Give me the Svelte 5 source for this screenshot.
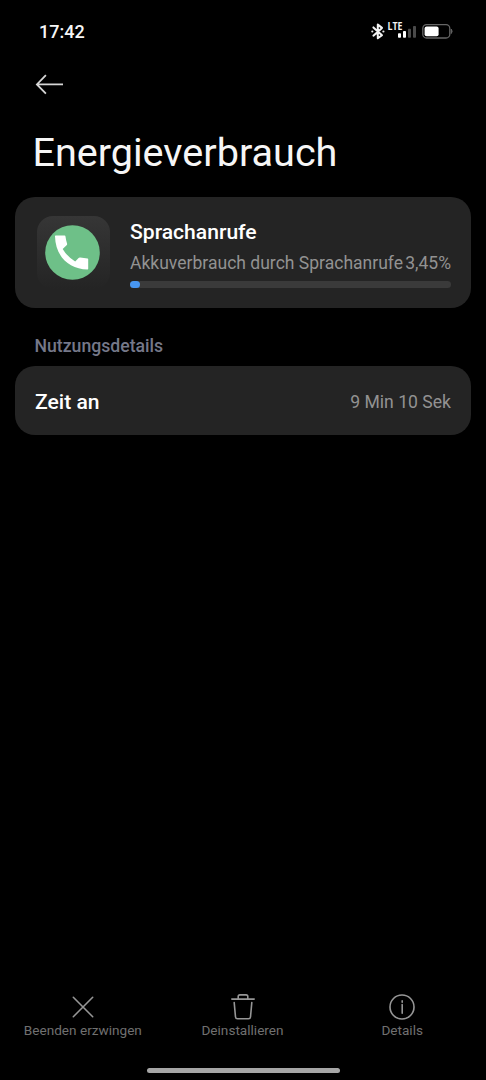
<script>
  const app = {
    name: 'Sprachanrufe',
    summary: 'Akkuverbrauch durch Sprachanrufe',
    percent: 3.45,
  };
  const details = [{ label: 'Zeit an', value: '9 Min 10 Sek' }];
  const percentText = app.percent.toLocaleString('de-DE') + '%';
</script>

<div class="screen">
  <header class="status">
    <span class="clock">17:42</span>
    <svg class="indicators" width="86" height="24" viewBox="370 20 86 24" fill="none">
      <path d="M373.4 27.4 L382 35.2 L377.8 38.3 V24.6 L382 27.9 L373.4 35.7" stroke="#f4f4f4" stroke-width="2" stroke-linejoin="round" stroke-linecap="round" />
      <circle cx="372.3" cy="31.5" r="1.1" fill="#e8e8e8" />
      <circle cx="383.4" cy="31.5" r="1.1" fill="#e8e8e8" />
      <text x="387.5" y="30" class="lte" textLength="15" lengthAdjust="spacingAndGlyphs">LTE</text>
      <rect x="398" y="33.2" width="3" height="4.6" rx=".8" fill="#fff" />
      <rect x="403" y="31" width="3" height="6.8" rx=".8" fill="#fff" />
      <rect x="408" y="28.7" width="3" height="9.1" rx=".8" fill="#4a4a4a" />
      <rect x="413" y="26" width="3" height="11.8" rx=".8" fill="#4a4a4a" />
      <rect x="422.8" y="24.6" width="27" height="13.4" rx="3.8" stroke="#666" stroke-width="1.3" />
      <rect x="424.6" y="26.4" width="14" height="9.8" rx="2" fill="#fff" />
      <path d="M451.2 29 Q453.2 31.3 451.2 33.6Z" fill="#666" stroke="#666" stroke-width=".8" />
    </svg>
  </header>

  <nav class="toolbar">
    <svg width="30" height="24" viewBox="0 0 30 24" fill="none" stroke="#d6d6d6" stroke-width="1.8">
      <path d="M28 12.4H1.8M10.9 3.1 1.9 12.4l9 9.3" />
    </svg>
  </nav>

  <h1>Energieverbrauch</h1>

  <section class="card usage">
    <div class="app-icon">
      <svg width="55" height="55" viewBox="0 0 55 55">
        <circle cx="27.5" cy="27.5" r="27.3" fill="#6ec088" />
        <path d="M10.6 10.6H19.6Q20.4 10.6 20.5 11.4Q21 15.5 22.1 18.7Q22.3 19.6 21.6 20.3L17.7 23.9Q22.3 31.8 30.2 36.4L33.6 32.9Q34.3 32.3 35.2 32.5L42.6 33.5Q43.2 33.6 43.2 34.3V43.8Q43.2 44.5 42.5 44.5C23.8 44.1 10.4 31.2 10 11.3Q10 10.6 10.6 10.6Z" fill="#fff" />
      </svg>
    </div>
    <div class="usage-body">
      <h2>{app.name}</h2>
      <div class="usage-line"><span class="summary">{app.summary}</span><span class="pct">{percentText}</span></div>
      <div class="track"><div class="fill" style:width="{Math.floor(app.percent)}%"></div></div>
    </div>
  </section>

  <h3>Nutzungsdetails</h3>

  <section class="card details">
    {#each details as row}
      <div class="row">
        <span class="label">{row.label}</span>
        <span class="value">{row.value}</span>
      </div>
    {/each}
  </section>

  <footer>
    <div class="actions">
      <div class="action">
        <svg width="28" height="28" viewBox="0 0 28 28"><path d="M4.3 4.3 23.7 23.7M23.7 4.3 4.3 23.7" /></svg>
        <span>Beenden erzwingen</span>
      </div>
      <div class="action">
        <svg width="28" height="28" viewBox="0 0 28 28">
          <path d="M2.8 6.1H25.2M9.2 6V3.6Q9.2 1.9 10.9 1.9H17.1Q18.8 1.9 18.8 3.6V6M5.2 9.6 6.5 24Q6.7 25.8 8.5 25.8H19.5Q21.3 25.8 21.5 24L22.8 9.6" />
        </svg>
        <span>Deinstallieren</span>
      </div>
      <div class="action">
        <svg width="28" height="28" viewBox="0 0 28 28">
          <circle cx="14" cy="14" r="12" />
          <path d="M14.2 11.5V20.3" /><path d="M14.2 7.8V9.2" />
        </svg>
        <span>Details</span>
      </div>
    </div>
    <div class="handle"></div>
  </footer>
</div>

<style>
  :global(body) { background: #000; }
  .screen {
    box-sizing: border-box;
    width: 486px;
    height: 1080px;
    display: flex;
    flex-direction: column;
    background: #000;
    color: #f6f6f6;
    font-family: Roboto, sans-serif;
    overflow: hidden;
  }
  h1, h2, h3 { margin: 0; }
  span, h1, h2, h3 { white-space: nowrap; }
  .status {
    display: flex;
    justify-content: space-between;
    height: 44px;
    padding: 20px 30px 0 39px;
    box-sizing: border-box;
  }
  .clock { font-size: 18px; line-height: 24px; font-weight: 500; }
  .lte { font: 700 10px "Open Sans", sans-serif; fill: #f4f4f4; }
  .toolbar { padding: 28px 35px 0; height: 52px; box-sizing: border-box; }
  .toolbar svg { display: block; }
  h1 {
    padding-left: 32.4px;
    margin-top: 33px;
    font-size: 39.6px;
    line-height: 48px;
    font-weight: 400;
  }
  .card { margin: 0 15px; background: #242424; border-radius: 20px; box-sizing: border-box; }
  .usage { display: flex; height: 111px; margin-top: 20px; padding: 19px 20px 0 22px; gap: 20px; }
  .app-icon {
    display: flex;
    align-items: center;
    justify-content: center;
    width: 73px;
    height: 73px;
    padding-right: 2px;
    box-sizing: border-box;
    border-radius: 16px;
    background: linear-gradient(#363636, #242424);
  }
  .usage-body { flex: 1; min-width: 0; }
  h2 { font-size: 21.1px; line-height: 32px; font-weight: 500; color: #fff; }
  .usage-line { display: flex; justify-content: space-between; font-size: 17.55px; line-height: 24px; margin-top: 3px; color: #929292; }
  .track { height: 7px; margin-top: 6px; border-radius: 4px; background: #3a3a3a; }
  .fill { height: 7px; min-width: 10px; border-radius: 4px; background: #4796f1; }
  h3 { padding-left: 34.5px; margin-top: 26px; font-size: 17.65px; line-height: 24px; font-weight: 500; color: #757889; }
  .details { margin-top: 8px; padding: 0 20px; }
  .row { display: flex; align-items: center; justify-content: space-between; height: 69px; }
  .label { font-size: 21.1px; line-height: 24px; padding-top: 3px; font-weight: 500; color: #fff; }
  .value { font-size: 17.6px; line-height: 24px; padding-top: 3px; color: #929292; }
  footer { margin-top: auto; }
  .actions { display: flex; padding: 0 4px 0 3px; }
  .action { flex: 1; display: flex; flex-direction: column; align-items: center; font-size: 13.6px; line-height: 18px; color: #707070; }
  .action svg { fill: none; stroke: #969696; stroke-width: 1.6; stroke-linecap: round; }
  .handle { width: 193px; height: 5px; margin: 29px auto 7px; border-radius: 3px; background: #a6a6a6; }
</style>
